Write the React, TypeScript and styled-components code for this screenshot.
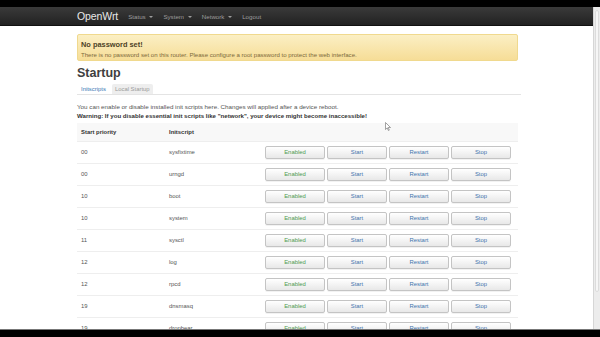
import React from "react";
import styled, { createGlobalStyle } from "styled-components";

const GlobalStyle = createGlobalStyle`
  html, body {
    margin: 0;
    padding: 0;
    background: #000;
  }
  body {
    font-family: "Liberation Sans", Arial, sans-serif;
    width: 600px;
    height: 337px;
    overflow: hidden;
  }
`;

type Row = { priority: string; name: string };

const rows: Row[] = [
  { priority: "00", name: "sysfixtime" },
  { priority: "00", name: "urngd" },
  { priority: "10", name: "boot" },
  { priority: "10", name: "system" },
  { priority: "11", name: "sysctl" },
  { priority: "12", name: "log" },
  { priority: "12", name: "rpcd" },
  { priority: "19", name: "dnsmasq" },
  { priority: "19", name: "dropbear" },
];

const Screen = styled.div`
  display: flex;
  flex-direction: column;
  width: 600px;
  height: 337px;
`;

const Letterbox = styled.div<{ $h: number }>`
  height: ${(p) => p.$h}px;
  flex: none;
  background: #000;
`;

const Window = styled.div`
  display: flex;
  height: 322px;
  flex: none;
  border-bottom: 1px solid #777;
`;

const Viewport = styled.div`
  flex: 1;
  background: #fff;
  overflow: hidden;
  position: relative;
`;

const Scrollbar = styled.div`
  width: 6px;
  flex: none;
  background: #ececec;
  border-left: 1px solid #d6d6d6;
  display: flex;
  flex-direction: column;
`;

const ScrollThumb = styled.div`
  margin: 3px 1px 0;
  height: 280px;
  background: #f6f6f6;
  border: 1px solid #dcdcdc;
  border-radius: 2px;
`;

const Navbar = styled.div`
  height: 18px;
  background: linear-gradient(#3a3a3a, #222);
  border-bottom: 1px solid #111;
`;

const Container = styled.div`
  width: 441px;
  margin-left: 77px;
`;

const NavInner = styled(Container)`
  display: flex;
  align-items: center;
  height: 18px;
`;

const Brand = styled.span`
  font-size: 10.5px;
  color: #e8e8e8;
  margin-right: 10px;
  letter-spacing: -0.1px;
`;

const NavItem = styled.span`
  font-size: 6.2px;
  color: #9d9d9d;
  margin-right: 10px;
`;

const Caret = styled.span`
  display: inline-block;
  margin-left: 2px;
  border-top: 2px solid #9d9d9d;
  border-left: 2px solid transparent;
  border-right: 2px solid transparent;
  vertical-align: middle;
`;

const Alert = styled.div`
  margin-top: 8px;
  height: 27px;
  box-sizing: border-box;
  padding: 5px 3px 0;
  background: linear-gradient(#fbefc4, #f6dd97);
  border: 1px solid #f0d98e;
  border-radius: 2px;
`;

const AlertTitle = styled.div`
  font-size: 7.4px;
  font-weight: bold;
  color: #4d4326;
  line-height: 9px;
`;

const AlertText = styled.div`
  font-size: 6.1px;
  color: #7d6a3c;
  line-height: 9px;
  margin-top: 1px;
`;

const Heading = styled.h2`
  margin: 4px 0 0;
  font-size: 12.5px;
  font-weight: bold;
  color: #404040;
  line-height: 16px;
`;

const Tabs = styled.div`
  display: flex;
  gap: 3px;
  margin-top: 3px;
  padding-left: 1px;
  border-bottom: 1px solid #e4e4e4;
  width: 443px;
`;

const Tab = styled.span<{ $active?: boolean }>`
  font-size: 5.9px;
  line-height: 10px;
  padding: 0 3px;
  border-radius: 2px 2px 0 0;
  color: ${(p) => (p.$active ? "#3a77b5" : "#9a9a9a")};
  background: ${(p) => (p.$active ? "#fff" : "#eeeeee")};
`;

const Desc = styled.div`
  margin-top: 7px;
  font-size: 6.25px;
  color: #555;
  line-height: 9px;
`;

const Warning = styled.div`
  font-size: 6.1px;
  font-weight: bold;
  color: #333;
  line-height: 9px;
`;

const Table = styled.table`
  margin-top: 3px;
  width: 441px;
  table-layout: fixed;
  border-collapse: collapse;
  font-size: 5.9px;
  color: #555;
`;

const HeadRow = styled.tr`
  background: #f8f8f8;
  height: 18px;
`;

const Th = styled.th<{ $w: number }>`
  text-align: left;
  font-weight: bold;
  color: #333;
  padding: 0 0 0 4px;
  width: ${(p) => p.$w}px;
  box-sizing: border-box;
`;

const BodyRow = styled.tr`
  height: 22px;
  border-top: 1px solid #eee;
`;

const Td = styled.td`
  padding: 0 0 0 4px;
`;

const ButtonCell = styled.td`
  padding: 0;
`;

const Buttons = styled.div`
  display: flex;
  gap: 2px;
`;

const Btn = styled.span<{ $tone: "green" | "blue" }>`
  width: 60px;
  height: 13px;
  box-sizing: border-box;
  display: flex;
  align-items: center;
  justify-content: center;
  font-size: 5.9px;
  color: ${(p) => (p.$tone === "green" ? "#4f9a4f" : "#3f73ad")};
  background: linear-gradient(#fff, #e8e8e8);
  border: 1px solid #c4c4c4;
  border-radius: 2px;
  box-shadow: 0 1px 0 rgba(0, 0, 0, 0.05);
`;

const Cursor = styled.svg`
  position: absolute;
  left: 385px;
  top: 115px;
`;

export default function App() {
  return (
    <>
      <GlobalStyle />
      <Screen>
        <Letterbox $h={7} />
        <Window>
          <Viewport>
            <Navbar>
              <NavInner>
                <Brand>OpenWrt</Brand>
                <NavItem>
                  Status <Caret />
                </NavItem>
                <NavItem>
                  System <Caret />
                </NavItem>
                <NavItem>
                  Network <Caret />
                </NavItem>
                <NavItem>Logout</NavItem>
              </NavInner>
            </Navbar>
            <Container>
              <Alert>
                <AlertTitle>No password set!</AlertTitle>
                <AlertText>
                  There is no password set on this router. Please configure a
                  root password to protect the web interface.
                </AlertText>
              </Alert>
              <Heading>Startup</Heading>
              <Tabs>
                <Tab $active>Initscripts</Tab>
                <Tab>Local Startup</Tab>
              </Tabs>
              <Desc>
                You can enable or disable installed init scripts here. Changes
                will applied after a device reboot.
              </Desc>
              <Warning>
                Warning: If you disable essential init scripts like "network",
                your device might become inaccessible!
              </Warning>
              <Table>
                <thead>
                  <HeadRow>
                    <Th $w={88}>Start priority</Th>
                    <Th $w={100}>Initscript</Th>
                    <Th $w={253} />
                  </HeadRow>
                </thead>
                <tbody>
                  {rows.map((r, i) => (
                    <BodyRow key={i}>
                      <Td>{r.priority}</Td>
                      <Td>{r.name}</Td>
                      <ButtonCell>
                        <Buttons>
                          <Btn $tone="green">Enabled</Btn>
                          <Btn $tone="blue">Start</Btn>
                          <Btn $tone="blue">Restart</Btn>
                          <Btn $tone="blue">Stop</Btn>
                        </Buttons>
                      </ButtonCell>
                    </BodyRow>
                  ))}
                </tbody>
              </Table>
            </Container>
            <Cursor width="6" height="9" viewBox="0 0 6 9">
              <path d="M0.5 0.5 L0.5 7.5 L2.2 5.9 L3.4 8.5 L4.3 8.1 L3.2 5.5 L5.5 5.5 Z" fill="#fff" stroke="#666" strokeWidth="0.6" />
            </Cursor>
          </Viewport>
          <Scrollbar>
            <ScrollThumb />
          </Scrollbar>
        </Window>
        <Letterbox $h={7} />
      </Screen>
    </>
  );
}
